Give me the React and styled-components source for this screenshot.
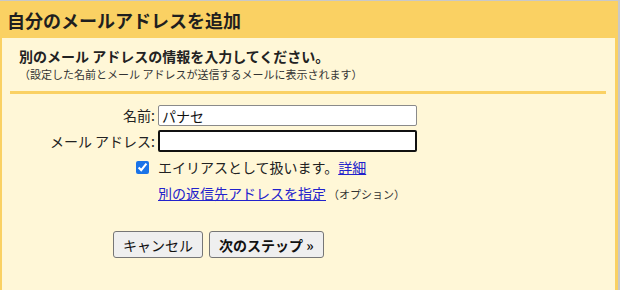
import React from 'react';
import styled, { createGlobalStyle } from 'styled-components';

const GlobalStyle = createGlobalStyle`
  html, body {
    margin: 0;
    padding: 0;
    background: #c8c8c8;
  }
  body {
    font-family: "Noto Sans CJK JP", "Liberation Sans", sans-serif;
    color: #222;
  }
`;

const Page = styled.div`
  width: 618px;
  height: 289px;
  margin-top: 1px;
  display: flex;
  flex-direction: column;
  background: #fad163;
`;

const Header = styled.h1`
  margin: 0;
  height: 37px;
  padding-left: 7px;
  display: flex;
  align-items: center;
  font-size: 18px;
  font-weight: 700;
  color: #1f1f1f;
`;

const Body = styled.div`
  flex: 1;
  margin: 0 3px 0 2px;
  background: #fff7d7;
  padding: 8px 9px 0 8px;
`;

const Intro = styled.div`
  padding-left: 9px;
`;

const Title = styled.div`
  font-size: 14px;
  font-weight: 700;
  line-height: 20px;
`;

const Note = styled.div`
  font-size: 11px;
  line-height: 16px;
  color: #333;
`;

const Divider = styled.hr`
  margin: 9px 0 0;
  border: 0;
  height: 3px;
  background: #fad163;
`;

const Form = styled.div`
  display: grid;
  grid-template-columns: 145px 259px;
  column-gap: 3px;
  row-gap: 4px;
  margin-top: 11px;
  font-size: 14px;
  align-items: center;
`;

const Label = styled.label`
  text-align: right;
  line-height: 21px;
`;

const TextInput = styled.input`
  box-sizing: border-box;
  height: ${(p) => (p.$focused ? '22px' : '21px')};
  width: 259px;
  margin: 0;
  padding: 0 3px;
  font: inherit;
  font-size: 14px;
  color: #111;
  background: #fff;
  border: ${(p) => (p.$focused ? '2px solid #111' : '1px solid #8a8a8a')};
  border-radius: 2px;
  outline: none;
`;

const CheckCell = styled.div`
  display: flex;
  justify-content: flex-end;
  padding-right: 6px;
`;

const Check = styled.input`
  margin: 0;
  width: 13px;
  height: 13px;
  accent-color: #1a73e8;
`;

const Line = styled.div`
  line-height: 22px;
  white-space: nowrap;
`;

const Link = styled.a`
  color: #2222cc;
  text-decoration: underline;
  cursor: pointer;
`;

const Small = styled.span`
  font-size: 11px;
  color: #333;
  margin-left: 2px;
`;

const Actions = styled.div`
  display: flex;
  gap: 6px;
  margin: 26px 0 0 103px;
`;

const Button = styled.button`
  height: 27px;
  padding: 0 9px;
  font: inherit;
  font-size: 14px;
  font-weight: ${(p) => (p.$primary ? 700 : 400)};
  color: #111;
  background: #efefef;
  border: 1px solid #767676;
  border-radius: 3px;
`;

export default function App() {
  return (
    <>
      <GlobalStyle />
      <Page>
        <Header>自分のメールアドレスを追加</Header>
        <Body>
          <Intro>
            <Title>別のメール アドレスの情報を入力してください。</Title>
            <Note>（設定した名前とメール アドレスが送信するメールに表示されます）</Note>
          </Intro>
          <Divider />
          <Form>
            <Label>名前:</Label>
            <TextInput defaultValue="パナセ" />
            <Label>メール アドレス:</Label>
            <TextInput $focused defaultValue="" />
            <CheckCell>
              <Check type="checkbox" defaultChecked />
            </CheckCell>
            <Line>
              エイリアスとして扱います。<Link>詳細</Link>
            </Line>
            <span />
            <Line>
              <Link>別の返信先アドレスを指定</Link>
              <Small>（オプション）</Small>
            </Line>
          </Form>
          <Actions>
            <Button>キャンセル</Button>
            <Button $primary>次のステップ »</Button>
          </Actions>
        </Body>
      </Page>
    </>
  );
}
